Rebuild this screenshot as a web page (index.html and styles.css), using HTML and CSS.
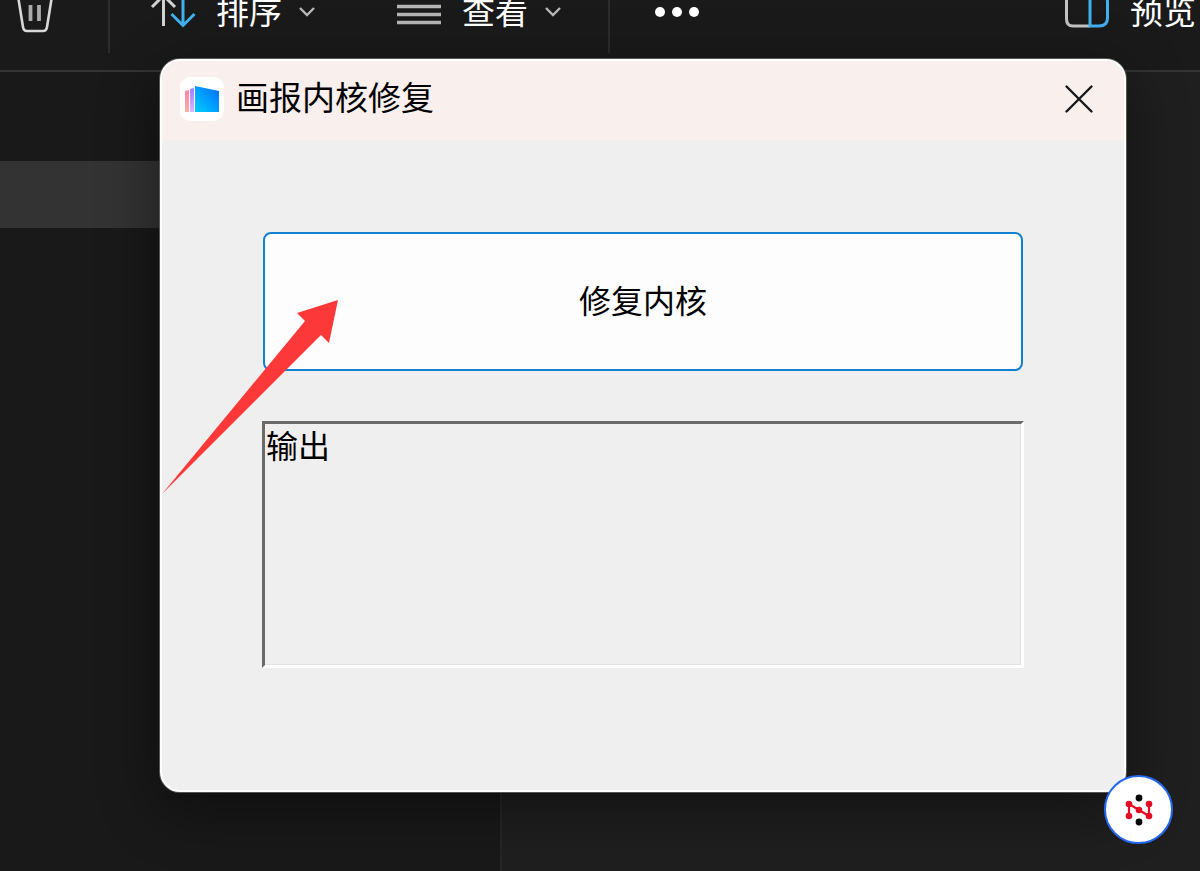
FILE: index.html
```html
<!DOCTYPE html>
<html lang="zh-CN">
<head>
<meta charset="utf-8">
<title>画报内核修复</title>
<link rel="stylesheet" href="styles.css">
</head>
<body>
<div class="explorer">
  <header class="toolbar">
    <button class="tool trash" aria-label="Delete">
      <svg width="40" height="48" viewBox="0 0 40 48" fill="none" stroke="#d8d8d8" stroke-width="2.6" stroke-linecap="round"><path d="M2 9H38M14 9a6 6 0 0 1 12 0M3 9L8 40Q8.500 44 12 44H28Q31.500 44 32 40L37 9"/><path d="M15.500 18V34M24 18V34" stroke-width="3.800" stroke="#aaa" stroke-linecap="butt"/></svg>
    </button>
    <span class="divider"></span>
    <button class="tool sort">
      <svg width="46" height="40" viewBox="0 0 46 40" fill="none" stroke-width="3"><path d="M13.500 35V5M2 16L13.500 4.500L25 16" stroke="#d2d2d2"/><path d="M33 4V34M21.500 23L33 34.500L44.500 23" stroke="#42b0ee"/></svg>
      <span>排序</span>
      <svg class="chevron" width="18" height="12" viewBox="0 0 18 12" fill="none" stroke="#b8b8b8" stroke-width="2.400"><path d="M2 3L9 10L16 3"/></svg>
    </button>
    <button class="tool view">
      <svg width="46" height="40" viewBox="0 0 46 40" stroke-width="3.600" stroke="#b4b4b4"><path d="M1 23.500H45M1 31.500H45M1 15.500H45"/></svg>
      <span>查看</span>
      <svg class="chevron" width="18" height="12" viewBox="0 0 18 12" fill="none" stroke="#b8b8b8" stroke-width="2.400"><path d="M2 3L9 10L16 3"/></svg>
    </button>
    <span class="divider"></span>
    <button class="tool more" aria-label="More">
      <svg width="46" height="14" viewBox="0 0 46 14" fill="#fff"><circle cx="6" cy="8" r="5"/><circle cx="23" cy="8" r="5"/><circle cx="40" cy="8" r="5"/></svg>
    </button>
    <button class="tool preview">
      <svg width="46" height="40" viewBox="0 0 46 40" fill="none" stroke-width="3"><path d="M26 3H9Q2.500 3 2.500 9V28Q2.500 35 9 35H26" stroke="#c4c4c4"/><path d="M26 3H35Q43.500 3 43.500 11V27Q43.500 35 35 35H26Z" stroke="#42b0ee"/></svg>
      <span>预览</span>
    </button>
  </header>
  <main class="panes">
    <nav class="tree"><div class="selected-row"></div></nav>
    <section class="files"></section>
  </main>
</div>

<section class="dialog" role="dialog" aria-labelledby="title">
  <header class="titlebar">
    <svg class="logo" width="44" height="44" viewBox="0 0 44 44">
      <defs>
        <linearGradient id="blue" x1="0" y1="1" x2="1" y2="0"><stop offset="0" stop-color="#00d0ff"/><stop offset="1" stop-color="#006cff"/></linearGradient>
        <linearGradient id="pink" x1="0" y1="0" x2="0" y2="1"><stop offset="0" stop-color="#ff83aa"/><stop offset="1" stop-color="#ffb0a6"/></linearGradient>
        <linearGradient id="violet" x1="0" y1="0" x2="0" y2="1"><stop offset="0" stop-color="#a779ff"/><stop offset="1" stop-color="#dcb9ff"/></linearGradient>
      </defs>
      <rect width="44" height="44" rx="10" fill="#fff"/>
      <path d="M5 14L9 13V35H5Z" fill="url(#pink)"/>
      <path d="M10 12L14 11V35H10Z" fill="url(#violet)"/>
      <path d="M15 9L39 14V35H15Z" fill="url(#blue)"/>
    </svg>
    <h1 id="title">画报内核修复</h1>
    <button class="close" aria-label="Close"><svg width="30" height="30" viewBox="0 0 30 30" stroke="#17171a" stroke-width="2.400" stroke-linecap="round"><path d="M2.500 2.500L27.500 27.500M27.500 2.500L2.500 27.500"/></svg></button>
  </header>
  <div class="content">
    <button class="repair">修复内核</button>
    <textarea class="log" aria-label="输出" readonly>输出</textarea>
  </div>
  <svg class="arrow" width="178" height="196" viewBox="0 0 178 196"><path d="M0 195L143 22L135 14L176 1L167 44L159 36Z" fill="#fc3838"/></svg>
</section>

<button class="assistant" aria-label="Assistant">
  <svg width="30" height="34" viewBox="0 0 30 34"><path d="M5 23V11L25 23V11" fill="none" stroke="#e60b24" stroke-width="2.200"/><g fill="#e60b24"><circle cx="5" cy="11" r="3.300"/><circle cx="5" cy="23" r="3.300"/><circle cx="15" cy="17" r="3.300"/><circle cx="25" cy="11" r="3.300"/><circle cx="25" cy="23" r="3.300"/></g><circle cx="15" cy="5" r="3.400" fill="#080808"/><circle cx="15" cy="29" r="3.400" fill="#080808"/></svg>
</button>
</body>
</html>
```
FILE: styles.css
```css
* {
  box-sizing: border-box;
}

body {
  margin: 0;
  overflow: hidden;
  background: #191919;
  color: #fff;
  font-family: "Noto Sans CJK SC", sans-serif;
}

button {
  margin: 0;
  padding: 0;
  border: 0;
  background: none;
  color: inherit;
  font: inherit;
}

svg {
  display: block;
  flex: none;
}

.explorer {
  display: flex;
  flex-direction: column;
  height: 100vh;
}

.toolbar {
  display: flex;
  flex: none;
  align-items: center;
  height: 120px;
  margin-top: -48px;
  padding: 0 4px 0 15px;
  border-bottom: 2px solid #343434;
  background: #1a1a1a;
}

.tool {
  display: flex;
  align-items: center;
  font-size: 33px;
  line-height: 40px;
}

.tool span {
  margin-left: 20px;
  padding-bottom: 2px;
}

.chevron {
  margin-left: 16px;
}

.divider {
  width: 2px;
  height: 84px;
  background: #2c2c2c;
}

.trash {
  margin-right: 53px;
}

.sort {
  margin-left: 40px;
  margin-right: 80px;
}

.view {
  margin-right: 46px;
}

.more {
  margin-left: 44px;
}

.preview {
  margin-left: auto;
}

.panes {
  display: grid;
  flex: 1;
  grid-template-columns: 502fr 698fr;
}

.tree {
  padding-top: 89px;
  border-right: 2px solid #262626;
  background: #191919;
}

.selected-row {
  height: 67px;
  background: #333;
}

.files {
  background: #1f1f1f;
}

.dialog {
  position: absolute;
  top: 59px;
  left: 160px;
  right: 74px;
  border: 2px solid #fff;
  border-radius: 20px;
  background: #efefef;
  color: #000;
  box-shadow: 0 0 0 1px #555, 0 16px 60px rgba(0, 0, 0, 0.45);
}

.titlebar {
  display: flex;
  align-items: center;
  height: 79px;
  padding: 0 30px 4px 18px;
  border-radius: 18px 18px 0 0;
  background: #f9efed;
}

.titlebar h1 {
  margin: 0 auto 0 12px;
  padding-bottom: 6px;
  font-size: 33px;
  font-weight: 400;
  line-height: 40px;
}

.content {
  display: flex;
  flex-direction: column;
  gap: 50px;
  padding: 92px 100px 122px;
}

.repair {
  height: 139px;
  margin: 0 1px;
  padding-bottom: 6px;
  border: 2px solid #1480d0;
  border-radius: 8px;
  background: #fdfdfd;
  font-size: 32px;
}

.log {
  display: block;
  width: 100%;
  height: 247px;
  padding: 0 1px;
  border: 3px solid;
  border-color: #6b6b6b #fff #fff #6b6b6b;
  outline: 0;
  resize: none;
  background: #efefef;
  box-shadow: inset -1px -1px #e2e2e2;
  color: #000;
  font: 32px/40px "Noto Sans CJK SC", sans-serif;
}

.arrow {
  position: absolute;
  top: 238px;
  left: 0;
  pointer-events: none;
}

.assistant {
  position: absolute;
  right: 27px;
  bottom: 27px;
  display: grid;
  place-items: center;
  width: 69px;
  height: 69px;
  border: 2px solid #2468f2;
  border-radius: 50%;
  background: #fff;
}
```
